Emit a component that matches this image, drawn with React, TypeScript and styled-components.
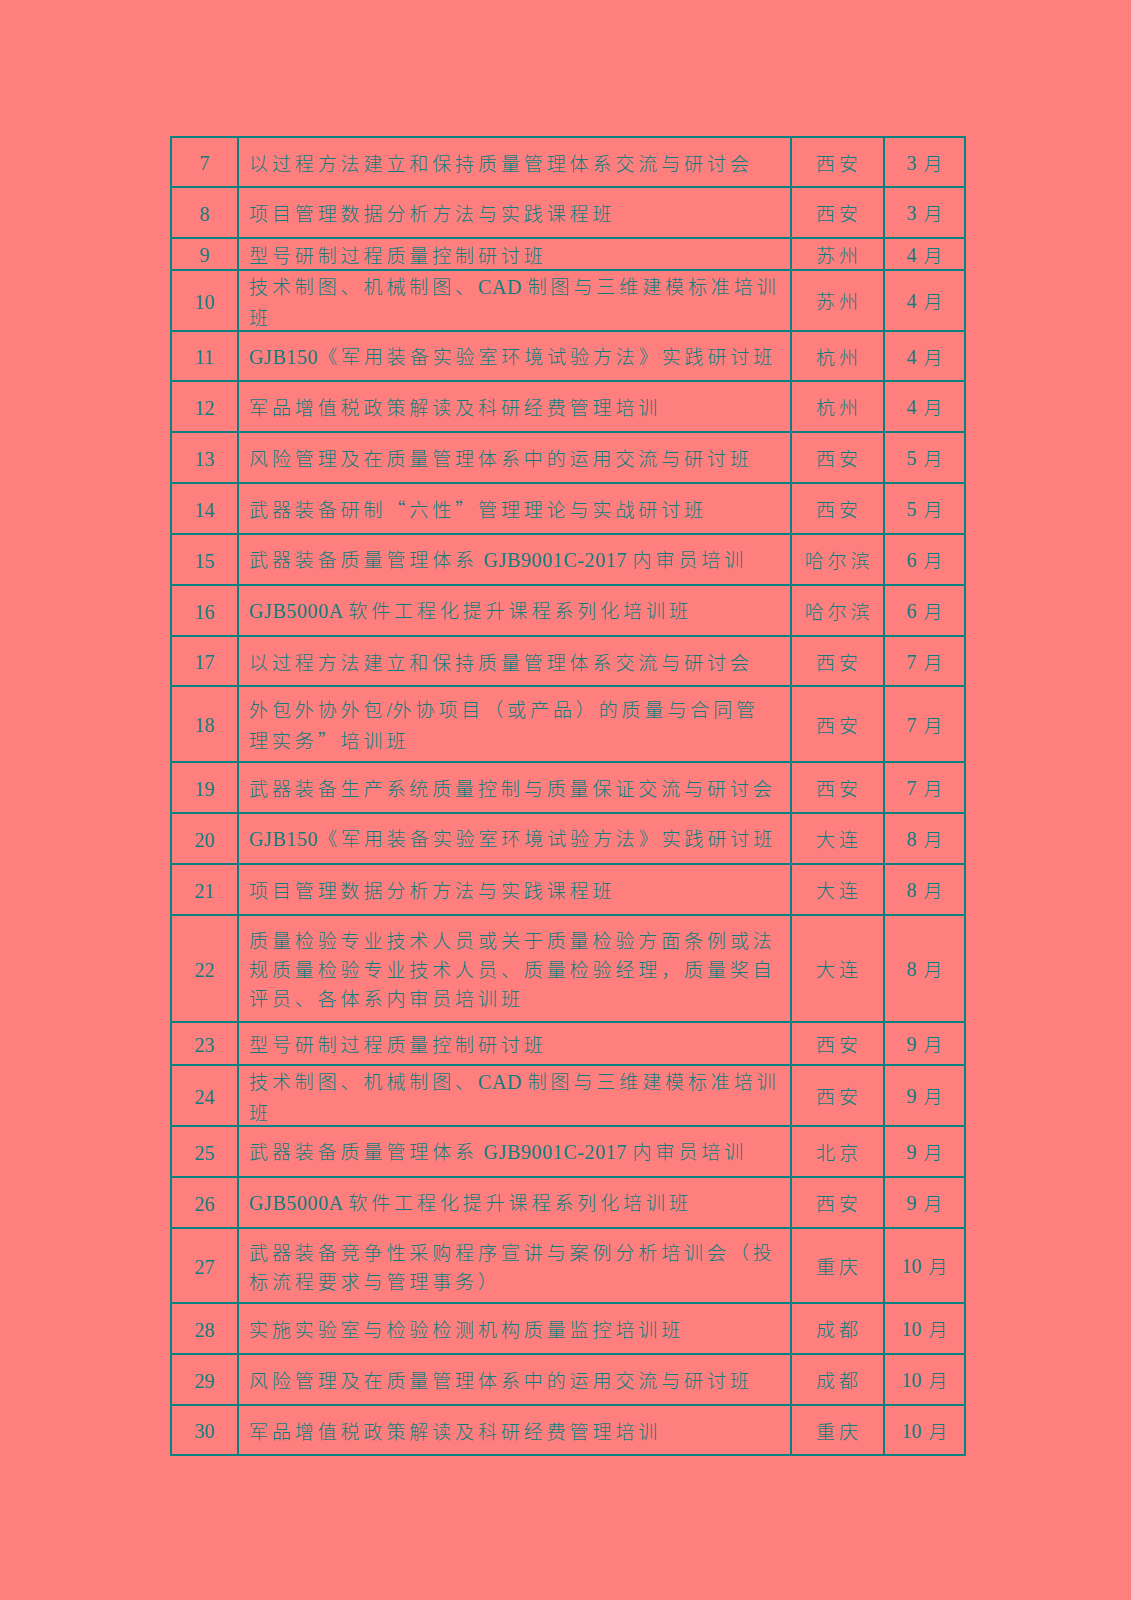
import React from "react";
import styled, { createGlobalStyle } from "styled-components";

const GlobalStyle = createGlobalStyle`
  html, body {
    margin: 0;
    padding: 0;
    background: #ff7f7f;
  }
  body {
    font-family: "Noto Sans CJK SC", "Liberation Serif", serif;
  }
`;

const LINE = "#0b8080";
const INK = "#0f7d7d";
const BG = "#ff7f7f";

const Page = styled.div`
  min-height: 1600px;
  padding: 136px 0 0 170px;
  box-sizing: border-box;
  background: ${BG};
`;

const Table = styled.div`
  display: flex;
  flex-direction: column;
  gap: 2px;
  width: 796px;
  padding: 2px;
  box-sizing: border-box;
  background: ${LINE};
`;

const Row = styled.div<{ $h: number }>`
  display: grid;
  grid-template-columns: 65px 551px 91px 79px;
  gap: 2px;
  height: ${(p) => p.$h - 2}px;
`;

const Cell = styled.div`
  background: ${BG};
  display: flex;
  align-items: center;
  color: ${INK};
  overflow: hidden;
`;

const NumCell = styled(Cell)`
  justify-content: center;
  padding-top: 3px;
  font-family: "Liberation Serif", serif;
  font-size: 20px;
`;

const TextCell = styled(Cell)`
  padding-left: 10px;
  font-family: "Noto Sans CJK SC", sans-serif;
  font-weight: 300;
  font-size: 19px;
  letter-spacing: 3.9px;
  line-height: 29px;
  white-space: nowrap;
`;

const CityCell = styled(Cell)`
  justify-content: center;
  padding-left: 3px;
  font-family: "Noto Sans CJK SC", sans-serif;
  font-weight: 300;
  font-size: 19px;
  letter-spacing: 3.9px;
`;

const MonthCell = styled(Cell)`
  justify-content: center;
  font-family: "Noto Sans CJK SC", sans-serif;
  font-weight: 300;
  font-size: 19px;
`;

const Latin = styled.span`
  font-family: "Liberation Serif", serif;
  font-weight: 400;
  font-size: 20px;
  letter-spacing: 0.6px;
`;

const Digit = styled.span`
  font-family: "Liberation Serif", serif;
  font-weight: 400;
  font-size: 20px;
  margin-right: 7px;
  position: relative;
  top: 1px;
`;

type RowData = { n: number; lines: string[]; city: string; m: string; h: number };

const rows: RowData[] = [
  { n: 7, lines: ["以过程方法建立和保持质量管理体系交流与研讨会"], city: "西安", m: "3", h: 50 },
  { n: 8, lines: ["项目管理数据分析方法与实践课程班"], city: "西安", m: "3", h: 51 },
  { n: 9, lines: ["型号研制过程质量控制研讨班"], city: "苏州", m: "4", h: 32 },
  { n: 10, lines: ["技术制图、机械制图、CAD 制图与三维建模标准培训", "班"], city: "苏州", m: "4", h: 61 },
  { n: 11, lines: ["GJB150《军用装备实验室环境试验方法》实践研讨班"], city: "杭州", m: "4", h: 50 },
  { n: 12, lines: ["军品增值税政策解读及科研经费管理培训"], city: "杭州", m: "4", h: 51 },
  { n: 13, lines: ["风险管理及在质量管理体系中的运用交流与研讨班"], city: "西安", m: "5", h: 51 },
  { n: 14, lines: ["武器装备研制“六性”管理理论与实战研讨班"], city: "西安", m: "5", h: 51 },
  { n: 15, lines: ["武器装备质量管理体系 GJB9001C-2017 内审员培训"], city: "哈尔滨", m: "6", h: 51 },
  { n: 16, lines: ["GJB5000A 软件工程化提升课程系列化培训班"], city: "哈尔滨", m: "6", h: 51 },
  { n: 17, lines: ["以过程方法建立和保持质量管理体系交流与研讨会"], city: "西安", m: "7", h: 50 },
  { n: 18, lines: ["外包外协外包/外协项目（或产品）的质量与合同管", "理实务”培训班"], city: "西安", m: "7", h: 76 },
  { n: 19, lines: ["武器装备生产系统质量控制与质量保证交流与研讨会"], city: "西安", m: "7", h: 51 },
  { n: 20, lines: ["GJB150《军用装备实验室环境试验方法》实践研讨班"], city: "大连", m: "8", h: 51 },
  { n: 21, lines: ["项目管理数据分析方法与实践课程班"], city: "大连", m: "8", h: 51 },
  {
    n: 22,
    lines: [
      "质量检验专业技术人员或关于质量检验方面条例或法",
      "规质量检验专业技术人员、质量检验经理，质量奖自",
      "评员、各体系内审员培训班",
    ],
    city: "大连",
    m: "8",
    h: 107,
  },
  { n: 23, lines: ["型号研制过程质量控制研讨班"], city: "西安", m: "9", h: 43 },
  { n: 24, lines: ["技术制图、机械制图、CAD 制图与三维建模标准培训", "班"], city: "西安", m: "9", h: 61 },
  { n: 25, lines: ["武器装备质量管理体系 GJB9001C-2017 内审员培训"], city: "北京", m: "9", h: 51 },
  { n: 26, lines: ["GJB5000A 软件工程化提升课程系列化培训班"], city: "西安", m: "9", h: 51 },
  {
    n: 27,
    lines: ["武器装备竞争性采购程序宣讲与案例分析培训会（投", "标流程要求与管理事务）"],
    city: "重庆",
    m: "10",
    h: 75,
  },
  { n: 28, lines: ["实施实验室与检验检测机构质量监控培训班"], city: "成都", m: "10", h: 51 },
  { n: 29, lines: ["风险管理及在质量管理体系中的运用交流与研讨班"], city: "成都", m: "10", h: 51 },
  { n: 30, lines: ["军品增值税政策解读及科研经费管理培训"], city: "重庆", m: "10", h: 50 },
];

function renderLine(s: string, key: number) {
  const parts = s.split(/([A-Za-z0-9\-\/ ]+)/);
  return (
    <React.Fragment key={key}>
      {parts.map((p, i) =>
        /^[A-Za-z0-9\-\/ ]+$/.test(p) ? <Latin key={i}>{p}</Latin> : <React.Fragment key={i}>{p}</React.Fragment>
      )}
    </React.Fragment>
  );
}

export default function App() {
  return (
    <>
      <GlobalStyle />
      <Page>
        <Table>
          {rows.map((r) => (
            <Row key={r.n} $h={r.h}>
              <NumCell>{r.n}</NumCell>
              <TextCell>
                <div>
                  {r.lines.map((l, i) => (
                    <React.Fragment key={i}>
                      {i > 0 && <br />}
                      {renderLine(l, i)}
                    </React.Fragment>
                  ))}
                </div>
              </TextCell>
              <CityCell>{r.city}</CityCell>
              <MonthCell>
                <Digit>{r.m}</Digit>月
              </MonthCell>
            </Row>
          ))}
        </Table>
      </Page>
    </>
  );
}
